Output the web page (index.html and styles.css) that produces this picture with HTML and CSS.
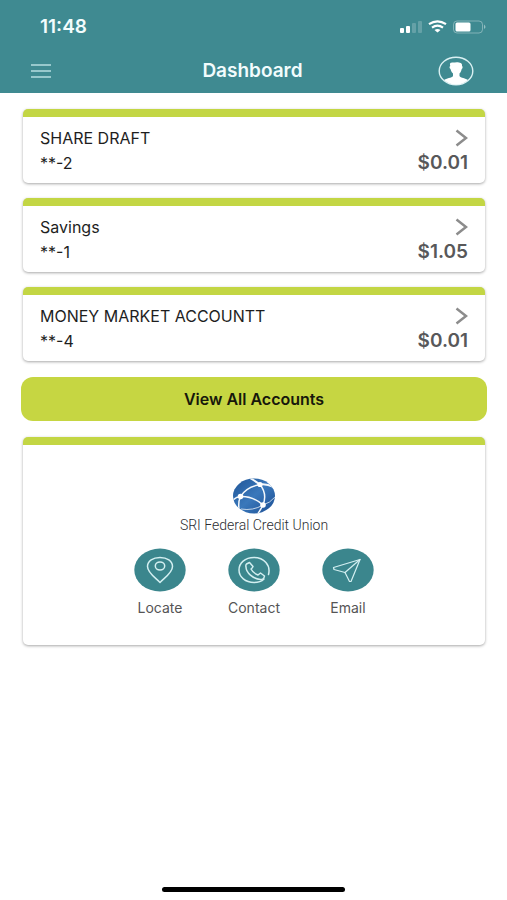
FILE: index.html
```html
<!DOCTYPE html>
<html lang="en">
<head>
<meta charset="utf-8">
<meta name="viewport" content="width=device-width, initial-scale=1">
<title>Dashboard</title>
<link rel="stylesheet" href="styles.css">
</head>
<body>
<header class="header">
  <div class="status">
    <span class="time">11:48</span>
    <svg class="status-icons" width="88" height="16" viewBox="0 0 88 16" aria-hidden="true">
      <g fill="#fff">
        <rect x="1" y="10" width="4" height="5" rx="1"/>
        <rect x="7" y="8" width="4" height="7" rx="1"/>
        <rect x="13" y="5" width="4" height="10" rx="1" opacity=".2"/>
        <rect x="19" y="3" width="4" height="12" rx="1" opacity=".2"/>
        <path d="M38.500 14.500L35.500 12Q38.500 10 41.500 12Z"/>
      </g>
      <g fill="none" stroke="#fff" stroke-width="2.200">
        <path d="M30 6.200Q38.500 .600 47 6.200"/>
        <path d="M33 9.700Q38.500 5.700 44 9.700"/>
      </g>
      <rect x="54.500" y="3" width="29" height="12" rx="3.500" fill="none" stroke="#fff" stroke-opacity=".35"/>
      <rect x="56.500" y="4.500" width="15" height="9" rx="1.500" fill="#fff"/>
      <path d="M85 6.500Q88 9 85 11Z" fill="#fff" opacity=".45"/>
    </svg>
  </div>
  <div class="navbar">
    <button class="icon-button menu" aria-label="Menu">
      <svg width="20" height="16" viewBox="0 0 20 16"><path d="M0 2H20M0 8H20M0 14H20" stroke="#b5dde0" stroke-width="1.500"/></svg>
    </button>
    <h1 class="title">Dashboard</h1>
    <button class="icon-button profile" aria-label="Profile">
      <svg width="36" height="30" viewBox="0 0 36 30">
        <ellipse cx="18" cy="15" rx="16.800" ry="13.700" fill="none" stroke="#d9f0f2" stroke-width="1.400"/>
        <path d="M6 24C8 22.300 14 22 15 20V17.500C13 16 13 14 12.500 13C11.300 12.500 11.200 10.200 12.300 10C11.200 7 13 6.500 15 6.600C18 5.800 25 5.500 24 10C25 10.500 24.700 12.500 23.700 13C23.300 14.500 23 16.200 21.500 17.500V20C22.500 22 28 22.300 30 24Q25 28.600 18 28.600T6 24Z" fill="#fff"/>
      </svg>
    </button>
  </div>
</header>

<main class="content">
  <a class="card account" href="#share-draft">
    <span class="row"><span>SHARE DRAFT</span><svg class="chevron" width="13" height="18" viewBox="0 0 13 18"><path d="M1.500 1.500L11 9L1.500 16.500"/></svg></span>
    <span class="row"><span>**-2</span><strong class="amount">$0.01</strong></span>
  </a>
  <a class="card account" href="#savings">
    <span class="row"><span>Savings</span><svg class="chevron" width="13" height="18" viewBox="0 0 13 18"><path d="M1.500 1.500L11 9L1.500 16.500"/></svg></span>
    <span class="row"><span>**-1</span><strong class="amount">$1.05</strong></span>
  </a>
  <a class="card account" href="#money-market">
    <span class="row"><span>MONEY MARKET ACCOUNTT</span><svg class="chevron" width="13" height="18" viewBox="0 0 13 18"><path d="M1.500 1.500L11 9L1.500 16.500"/></svg></span>
    <span class="row"><span>**-4</span><strong class="amount">$0.01</strong></span>
  </a>

  <button class="view-all">View All Accounts</button>

  <section class="card union">
    <svg width="42" height="36" viewBox="0 0 42 36" aria-hidden="true">
      <defs>
        <linearGradient id="globe" x1="0" y1="0" x2="1" y2="1"><stop offset="0" stop-color="#1f5496"/><stop offset=".5" stop-color="#3a78bb"/><stop offset="1" stop-color="#1b4d92"/></linearGradient>
        <clipPath id="disc"><ellipse cx="21" cy="18" rx="21" ry="17.500"/></clipPath>
      </defs>
      <g clip-path="url(#disc)">
        <rect width="42" height="36" fill="url(#globe)"/>
        <g fill="none" stroke="#f4f8fc" stroke-width="1.500">
          <path d="M17 0Q22 3 27 6.500Q33 5.500 41 9" stroke-width="2"/>
          <path d="M27 6.500Q13 9 7.500 18.500Q5 24 6 31"/>
          <path d="M27 6.500Q34.500 16 30 27Q28 31 24 37"/>
          <path d="M0 22Q3 19 7.500 18.500Q20 18 30 27"/>
          <path d="M8 31Q20 33 30 27Q37 25 42 19" stroke-width="1" stroke-opacity=".75"/>
        </g>
        <g fill="#fff"><circle cx="27" cy="6.500" r="2.600"/><circle cx="7.500" cy="18.500" r="2.800"/><circle cx="30" cy="27" r="2.800"/></g>
      </g>
    </svg>
    <p class="union-name">SRI Federal Credit Union</p>
    <nav class="actions">
      <a class="action" href="#locate">
        <svg width="52" height="44" viewBox="0 0 52 44">
          <ellipse cx="26" cy="22" rx="25.700" ry="21.500" fill="#3b868d"/>
          <g class="line"><path d="M26 34.500C22.500 30.500 13.500 25 13.500 18.500C13.500 13 19 9.500 26 9.500S38.500 13 38.500 18.500C38.500 25 29.500 30.500 26 34.500Z"/><ellipse cx="26" cy="18" rx="4.700" ry="4"/></g>
        </svg>
        <span>Locate</span>
      </a>
      <a class="action" href="#contact">
        <svg width="52" height="44" viewBox="0 0 52 44">
          <ellipse cx="26" cy="22" rx="25.700" ry="21.500" fill="#3b868d"/>
          <g class="line"><path d="M40.500 26.500C43 17 36 9.500 26 9.500C17 9.500 11 15 11 22S17.500 34.500 26 34.500C30 34.500 34 33 36 31"/>
          <path d="M18.500 16L21.500 14.500L25 18.500Q24.500 20 23 21Q25 25 30 27L32.500 25L36.500 28Q36 31.500 32.500 31.500C25 31 18 24.500 18 19Q17.500 17 18.500 16Z"/></g>
        </svg>
        <span>Contact</span>
      </a>
      <a class="action" href="#email">
        <svg width="52" height="44" viewBox="0 0 52 44">
          <ellipse cx="26" cy="22" rx="25.700" ry="21.500" fill="#3b868d"/>
          <g class="line thin"><path d="M38 11.500L11.500 19.500L12 21.500L23 24.500L27.500 33.500L29 33.500Z"/><path d="M38 11.500L23 24.500"/></g>
        </svg>
        <span>Email</span>
      </a>
    </nav>
  </section>
</main>

<footer class="home"><div class="home-bar"></div></footer>
</body>
</html>
```
FILE: styles.css
```css
* {
  box-sizing: border-box;
}

body {
  margin: 0;
  min-height: 100vh;
  display: flex;
  flex-direction: column;
  background: #fff;
  color: #1e1e1e;
  font-family: Inter, "Liberation Sans", sans-serif;
  font-size: 16px;
}

button {
  font: inherit;
  border: 0;
  cursor: pointer;
}

a {
  color: inherit;
  text-decoration: none;
}

.header {
  background: #3f8a91;
  color: #f2fcfd;
  padding: 16px 20px 8px 40px;
}

.status {
  display: flex;
  justify-content: space-between;
  align-items: center;
  height: 20px;
}

.time {
  font-size: 19px;
  font-weight: 600;
}

.navbar {
  display: grid;
  grid-template-columns: 1fr auto 1fr;
  align-items: center;
  height: 49px;
  margin: 0 13px 0 -9px;
  padding-top: 20px;
}

.icon-button {
  display: flex;
  padding: 0;
  background: none;
}

.profile {
  justify-self: end;
}

.title {
  margin: 0;
  font-size: 19px;
  line-height: 24px;
  font-weight: 600;
}

.content {
  display: flex;
  flex-direction: column;
  gap: 15px;
  padding: 16px 22px 0 23px;
}

.card {
  background: #fff;
  border-top: 8px solid #c3d644;
  border-radius: 5px;
  box-shadow: 0 1px 3px rgba(0, 0, 0, 0.35);
}

.account {
  display: block;
  padding: 8px 17px;
}

.row {
  display: flex;
  justify-content: space-between;
  align-items: center;
  height: 25px;
}

.chevron {
  fill: none;
  stroke: #8c8c8c;
  stroke-width: 2.5;
}

.amount {
  color: #58585a;
  font-size: 19px;
  font-weight: 600;
}

.view-all {
  margin: 1px -2px;
  height: 44px;
  border-radius: 12px;
  background: #c6d642;
  color: #17180b;
  font-weight: 600;
}

.union {
  display: flex;
  flex-direction: column;
  align-items: center;
  padding: 33px 16px 28px;
}

.union-name {
  margin: 2px 0 14px;
  font-family: Roboto, "Liberation Sans", sans-serif;
  font-size: 14px;
  font-weight: 300;
  line-height: 18px;
  color: #2c2d32;
}

.actions {
  display: flex;
  gap: 14px;
}

.action {
  width: 80px;
  display: flex;
  flex-direction: column;
  align-items: center;
  gap: 7px;
  font-size: 14px;
  line-height: 18px;
  color: #555;
}

.line {
  fill: none;
  stroke: #d3eff1;
  stroke-width: 1.5;
  stroke-linejoin: round;
  stroke-linecap: round;
}

.thin {
  stroke-width: 1.2;
}

.home {
  margin-top: auto;
  padding: 16px 0 8px;
}

.home-bar {
  width: 36%;
  height: 5px;
  margin: 0 auto;
  border-radius: 3px;
  background: #000;
}
```
